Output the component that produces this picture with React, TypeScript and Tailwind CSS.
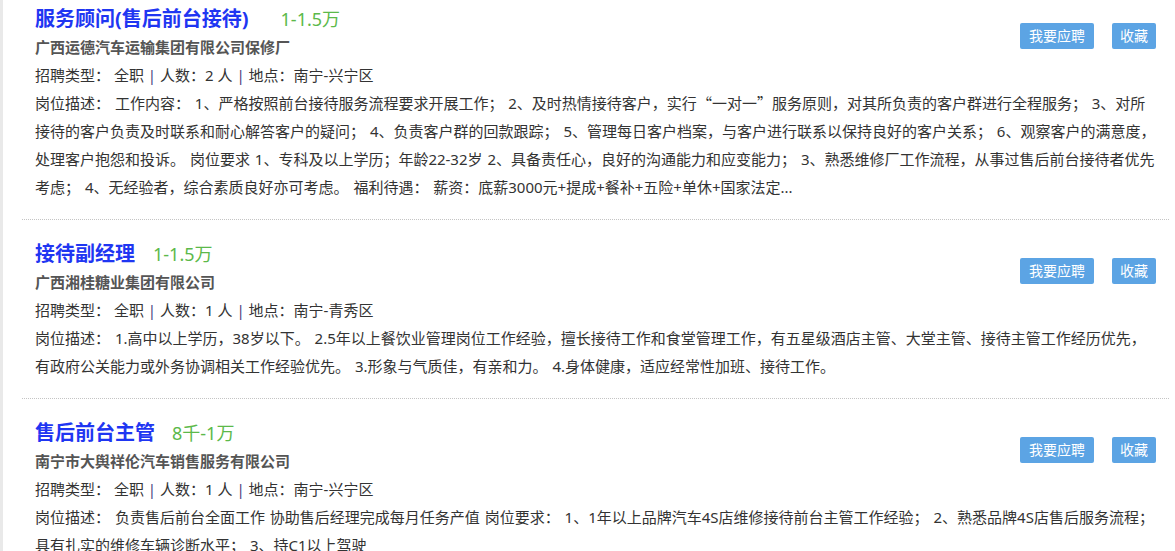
import type { ReactNode } from "react";

type Job = {
  title: string;
  salary: string;
  salaryGap: string;
  company: string;
  count: number;
  area: string;
  desc: ReactNode;
};

const jobs: Job[] = [
  {
    title: "服务顾问(售后前台接待)",
    salary: "1-1.5万",
    salaryGap: "ml-[32px]",
    company: "广西运德汽车运输集团有限公司保修厂",
    count: 2,
    area: "南宁-兴宁区",
    desc: (
      <>
        工作内容： 1、严格按照前台接待服务流程要求开展工作； 2、及时热情接待客户，实行
        <span className="font-['Noto_Sans_CJK_SC']">“一对一”</span>
        服务原则，对其所负责的客户群进行全程服务； 3、对所接待的客户负责及时联系和耐心解答客户的疑问； 4、负责客户群的回款跟踪； 5、管理每日客户档案，与客户进行联系以保持良好的客户关系； 6、观察客户的满意度，处理客户抱怨和投诉。 岗位要求 1、专科及以上学历；年龄22-32岁 2、具备责任心，良好的沟通能力和应变能力； 3、熟悉维修厂工作流程，从事过售后前台接待者优先考虑； 4、无经验者，综合素质良好亦可考虑。 福利待遇： 薪资：底薪3000元+提成+餐补+五险+单休+国家法定...
      </>
    ),
  },
  {
    title: "接待副经理",
    salary: "1-1.5万",
    salaryGap: "ml-[18px]",
    company: "广西湘桂糖业集团有限公司",
    count: 1,
    area: "南宁-青秀区",
    desc: "1.高中以上学历，38岁以下。 2.5年以上餐饮业管理岗位工作经验，擅长接待工作和食堂管理工作，有五星级酒店主管、大堂主管、接待主管工作经历优先，有政府公关能力或外务协调相关工作经验优先。 3.形象与气质佳，有亲和力。 4.身体健康，适应经常性加班、接待工作。",
  },
  {
    title: "售后前台主管",
    salary: "8千-1万",
    salaryGap: "ml-[17px]",
    company: "南宁市大舆祥伦汽车销售服务有限公司",
    count: 1,
    area: "南宁-兴宁区",
    desc: "负责售后前台全面工作 协助售后经理完成每月任务产值 岗位要求： 1、1年以上品牌汽车4S店维修接待前台主管工作经验； 2、熟悉品牌4S店售后服务流程；具有扎实的维修车辆诊断水平； 3、持C1以上驾驶",
  },
];

function JobItem({ job }: { job: Job }) {
  return (
    <div className="border-b border-dotted border-[#c4c4c4] pl-[13px] pr-[13px] pt-5 pb-[18px]">
      <div className="float-right mt-[18px] ml-4 flex gap-[18px]">
        <button className="h-[26px] rounded-[2px] bg-[#5ca4e4] px-[9px] text-[14px] leading-[26px] text-white">
          我要应聘
        </button>
        <button className="h-[26px] rounded-[2px] bg-[#5ca4e4] px-[8px] text-[14px] leading-[26px] text-white">
          收藏
        </button>
      </div>
      <div className="flex items-baseline leading-[28px]">
        <span className="text-[20px] font-bold text-[#1f36f2]">{job.title}</span>
        <span className={`text-[18px] text-[#5cb94a] ${job.salaryGap}`}>{job.salary}</span>
      </div>
      <div className="text-[15px] font-bold leading-[28px] text-[#555]">{job.company}</div>
      <div className="text-[15px] leading-[28px] text-[#333]">
        招聘类型： 全职 <span className="text-[#4a3f80]">|</span> 人数：{job.count} 人{" "}
        <span className="text-[#4a3f80]">|</span> 地点：{job.area}
      </div>
      <p className="text-[15px] leading-[28px] text-[#333] [word-spacing:1px]">岗位描述： {job.desc}</p>
    </div>
  );
}

export default function App() {
  return (
    <div
      className="min-h-[551px] overflow-hidden border-l-[3px] border-[#e9e9e9] bg-white"
      style={{ fontFamily: '"Noto Sans", "Noto Sans CJK SC", sans-serif' }}
    >
      <div className="-mt-[15px] ml-[19px] mr-[6px]">
        {jobs.map((job) => (
          <JobItem key={job.title} job={job} />
        ))}
      </div>
    </div>
  );
}
